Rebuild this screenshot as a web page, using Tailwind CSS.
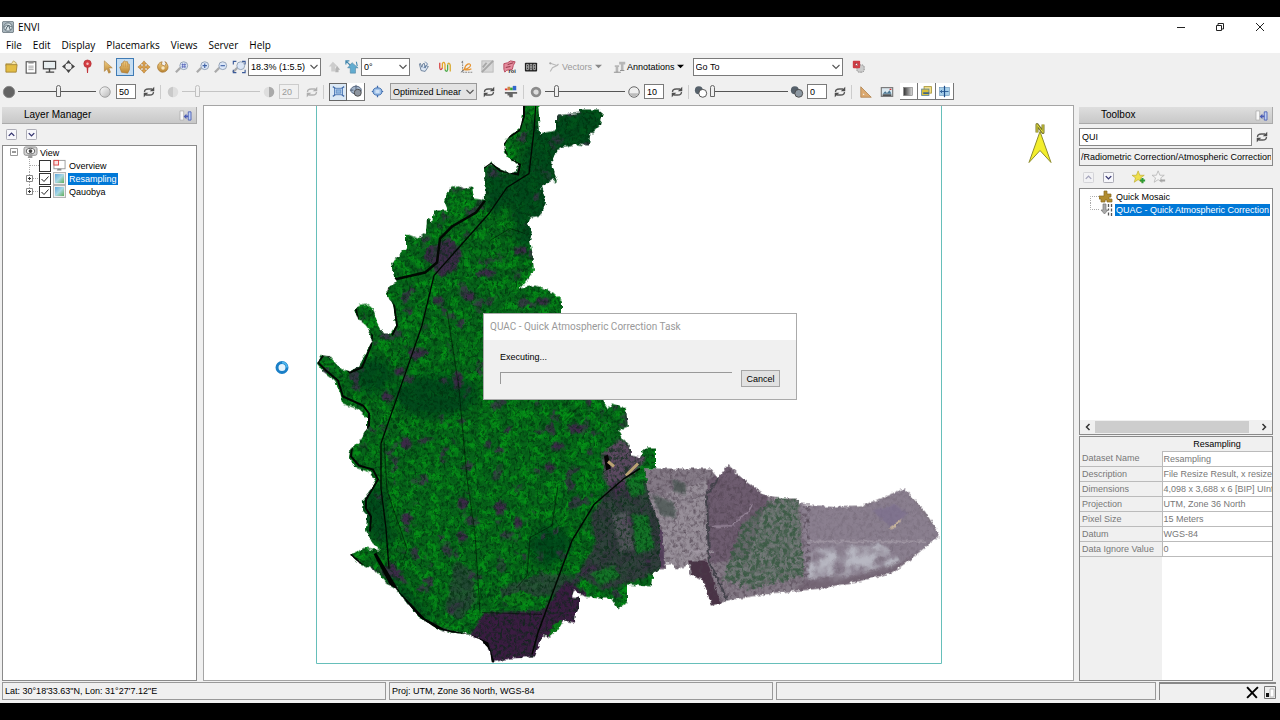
<!DOCTYPE html>
<html lang="en">
<head>
  <meta charset="UTF-8"/>
  <meta name="viewport" content="width=device-width, initial-scale=1.0"/>
  <title>ENVI</title>
  <script src="https://cdn.jsdelivr.net/npm/@tailwindcss/browser@4"></script>
</head>
<body class="bg-black">

  <!-- Icon set -->
  <svg class="absolute size-0" aria-hidden="true">
    <defs>
      <linearGradient id="gold" x1="0" y1="0" x2="0" y2="1"><stop offset="0" stop-color="#f3cf83"/><stop offset="1" stop-color="#b98432"/></linearGradient>
      <linearGradient id="ball" x1="0" y1="0" x2="1" y2="1"><stop offset="0" stop-color="#fff"/><stop offset="1" stop-color="#b5b5b5"/></linearGradient>
      <linearGradient id="sky" x1="0" y1="0" x2="1" y2="1"><stop offset="0" stop-color="#5fa8dc"/><stop offset=".5" stop-color="#a9d8e4"/><stop offset="1" stop-color="#5fae5a"/></linearGradient>
      <linearGradient id="ramp" x1="0" x2="1"><stop offset="0" stop-color="#333"/><stop offset="1" stop-color="#ddd"/></linearGradient>
    </defs>
    <symbol id="logo" viewBox="0 0 16 16"><rect x=".5" y=".5" width="15" height="15" rx="2" fill="#a9b6bd" stroke="#5c6a72"/><circle cx="8" cy="8" r="5.500" fill="#dce5e8" stroke="#4a5a64"/><path d="M3 8q3-4 6-2t4 1M5 12q1-5 4-6l2 6" fill="none" stroke="#4a5a64" stroke-width="1.200"/></symbol>
    <symbol id="open" viewBox="0 0 16 16"><path d="M2 5h6l2-3 3 2v3H2z" fill="#f6e6a8" stroke="#a88c3c" stroke-width=".7"/><path d="M2 6h12l-1 8H2z" fill="#e3bd45" stroke="#97762a" stroke-width=".8"/></symbol>
    <symbol id="clip" viewBox="0 0 16 16"><rect x="2.500" y="2" width="11" height="13" fill="#fff" stroke="#555" stroke-width="1.300"/><rect x="5" y="1" width="6" height="3" fill="#888"/><path d="M5 7h6M5 9h6M5 11h6" stroke="#999"/></symbol>
    <symbol id="screen" viewBox="0 0 16 16"><rect x="1.500" y="2.500" width="13" height="8" fill="#e8eef0" stroke="#444" stroke-width="1.300"/><path d="M8 10v4M4 14h9" stroke="#444" stroke-width="1.500"/></symbol>
    <symbol id="cross" viewBox="0 0 16 16"><circle cx="8" cy="8" r="4.500" fill="none" stroke="#444"/><path d="M8 0l3 4H5zM8 16l3-4H5zM0 8l4-3v6zM16 8l-4-3v6z" fill="#444"/><circle cx="8" cy="8" r="3.500" fill="#efefef"/></symbol>
    <symbol id="pin" viewBox="0 0 16 16"><circle cx="8" cy="5" r="4" fill="#d43d42" stroke="#a92b30" stroke-width=".6"/><circle cx="8" cy="5" r="1.300" fill="#f7c1c1"/><path d="M7 8h2l-.5 7h-1z" fill="#c2353a"/></symbol>
    <symbol id="arrow" viewBox="0 0 16 16"><path d="M5 1v12l3-3 2 5 2-1-2-5h4z" fill="url(#gold)" stroke="#ab7e3d" stroke-width=".7"/></symbol>
    <symbol id="hand" viewBox="0 0 16 16"><path d="M4 14L2 8l2-1V4l2-1V2l2-1 1 1 2 0v2l2 1v6l-2 4z" fill="url(#gold)" stroke="#b07c36" stroke-width=".8"/><path d="M6 3v5M8.500 2.500V8M11 4v4" stroke="#c38c43" stroke-width=".6"/></symbol>
    <symbol id="move" viewBox="0 0 16 16"><path d="M8 1l3 3.500H9V7h2.500V5L15 8l-3.500 3V9H9v2.500h2L8 15l-3-3.500h2V9H4.500v2L1 8l3.500-3v2H7V4.500H5z" fill="#dda24e" stroke="#a87530" stroke-width=".6"/></symbol>
    <symbol id="spin" viewBox="0 0 16 16"><path d="M13 5a6 6 0 1 1-6-3l-1 3 4 2 2-4-2-1a7 7 0 0 1 3 3z" fill="url(#gold)" stroke="#a6742f" stroke-width=".8"/><circle cx="8" cy="9" r="2" fill="#f8e7c2"/></symbol>
    <symbol id="lens" viewBox="0 0 16 16"><path d="M6 9L1 14" stroke="#a9a9a9" stroke-width="2.500"/><circle cx="10" cy="6.500" r="4.500" fill="#dbe6f6" stroke="#8c9bb0"/></symbol>
    <symbol id="zin" viewBox="0 0 16 16"><use href="#lens"/><path d="M7.500 6.500h5M10 4v5" stroke="#3f62a6" stroke-width="1.300"/></symbol>
    <symbol id="zout" viewBox="0 0 16 16"><use href="#lens"/><path d="M7.500 6.500h5" stroke="#3f62a6" stroke-width="1.300"/></symbol>
    <symbol id="zfix" viewBox="0 0 16 16"><use href="#lens"/><path d="M7.500 5.300h5M7.500 7.800h5M8.700 4v5M11.200 4v5" stroke="#5564b8" stroke-width=".9"/></symbol>
    <symbol id="zfit" viewBox="0 0 16 16"><use href="#lens"/><path d="M1.500 5V1.500H5M11.500 1.500H15V5M15 11v3.500h-3.500M5 14.500H1.500V11" fill="none" stroke="#3b5a98" stroke-width="1.300"/></symbol>
    <symbol id="up0" viewBox="0 0 16 16"><path d="M6 2l6 6H9v6H4V8H1z" fill="#ccc"/><path d="M11 7l4 5h-2v3h-4v-4z" fill="#b5b5b5"/></symbol>
    <symbol id="up1" viewBox="0 0 16 16"><path d="M8 3l7 6h-3v6H6V9H3z" fill="#62acd0" stroke="#4b7f9e" stroke-width=".6"/><path d="M1 5V1h4M1 1l5 5M13 2l1 5" stroke="#4689af" stroke-width="1.300" fill="none"/></symbol>
    <symbol id="fly" viewBox="0 0 16 16"><path d="M3 5l2 8 5 1 4-6-3-1-1 3-1-6-2 1-1 4-2-5z" fill="#dfe9f5" stroke="#59708e"/><path d="M10 2l3 3-5 5" fill="none" stroke="#4a6c9b"/></symbol>
    <symbol id="wave" viewBox="0 0 16 16"><g fill="none" stroke-width="1.500"><path d="M2 3v6q1 4 3 0" stroke="#d84848"/><path d="M5 9V4q2-3 3 1v6" stroke="#e4a428"/><path d="M8 11q2 4 3 0V5" stroke="#50ac4e"/><path d="M11 5q2-3 3 1v7" stroke="#d9aa33"/></g></symbol>
    <symbol id="scatter" viewBox="0 0 16 16"><path d="M3 2v12h12" fill="none" stroke="#777" stroke-dasharray="2 1"/><path d="M1 14l4-3M3 1l-1 2" stroke="#666"/><path d="M5 11c1-7 7-8 7-5s-4 4-7 5q5 1 8-1" fill="none" stroke="#e69432" stroke-width="1.400"/></symbol>
    <symbol id="gray" viewBox="0 0 16 16"><rect x="2" y="2" width="12" height="12" fill="#d8d8d8" stroke="#bbb"/><path d="M2 14L14 2M7 4L3 9" stroke="#a8a8a8" stroke-width="2"/></symbol>
    <symbol id="roi" viewBox="0 0 16 16"><path d="M2 5l4-1 3-2 5 1-2 4-1 4-6 1-2 2-1-3z" fill="#e58c9d" stroke="#b6475d"/><path d="M6 6l6-2M4 9l5-1" stroke="#8e3142"/><text x="7" y="15" font-family="Liberation Sans, sans-serif" font-size="6" font-weight="bold" fill="#222">roi</text></symbol>
    <symbol id="count" viewBox="0 0 16 16"><rect x="1" y="3" width="14" height="10" rx="1" fill="#222"/><path d="M3 5h2v6H3zM7 5h2v6H7zM11 5h2v6h-2zM3 8h2M7 8h2M11 8h2" fill="none" stroke="#ddd" stroke-width=".8"/></symbol>
    <symbol id="vec" viewBox="0 0 16 16"><path d="M3 3l9 3-6 3-3 5M12 6l2-2" fill="none" stroke="#b8b8b8" stroke-width="1.500"/><circle cx="3" cy="3" r="1.500" fill="#aaa"/></symbol>
    <symbol id="ann" viewBox="0 0 16 16"><path d="M7 2h7v3h-2v7H9V5H7zM2 6h5v2H6v6H3V8H2z" fill="#b7b7b7"/><path d="M1 14h8M8 12h5" stroke="#888"/></symbol>
    <symbol id="goto" viewBox="0 0 16 16"><rect x="6" y="6" width="9" height="9" rx="3" fill="#ccc" stroke="#777" stroke-dasharray="2 1"/><rect x="1" y="1" width="9" height="9" rx="1" fill="#cf3c45"/><rect x="4" y="4" width="3" height="3" fill="#fff" stroke="#8a1d28" stroke-width=".7"/></symbol>
    <symbol id="sync" viewBox="0 0 16 16"><path d="M2 8q0-4 5-4h5M14 8q0 4-5 4H4" fill="none" stroke="#5a5a5a" stroke-width="1.800"/><path d="M15 1v6H9zM1 15V9h6z" fill="#4d4d4d"/></symbol>
    <symbol id="dark" viewBox="0 0 16 16"><circle cx="8" cy="8" r="6.500" fill="#636363" stroke="#868686"/></symbol>
    <symbol id="light" viewBox="0 0 16 16"><circle cx="8" cy="8" r="6" fill="url(#ball)" stroke="#999"/></symbol>
    <symbol id="halfl" viewBox="0 0 16 16"><path d="M8 2a6 6 0 0 0 0 12z" fill="#c9c9c9"/><path d="M8 2a6 6 0 0 1 0 12z" fill="#dedede"/></symbol>
    <symbol id="halfr" viewBox="0 0 16 16"><path d="M8 2a6 6 0 0 0 0 12z" fill="#dedede"/><path d="M8 2a6 6 0 0 1 0 12z" fill="#aaa"/></symbol>
    <symbol id="ring" viewBox="0 0 16 16"><circle cx="8" cy="8" r="4.500" fill="#ddd" stroke="#8b8b8b" stroke-width="3"/></symbol>
    <symbol id="half2" viewBox="0 0 16 16"><circle cx="8" cy="8" r="6" fill="#eee" stroke="#555"/><path d="M2.500 9.500a6 6 0 0 0 11 0z" fill="#bbb"/></symbol>
    <symbol id="two0" viewBox="0 0 16 16"><circle cx="5.500" cy="6" r="4.500" fill="#56616b"/><circle cx="10" cy="9.500" r="4.500" fill="#fff" stroke="#444"/></symbol>
    <symbol id="two1" viewBox="0 0 16 16"><circle cx="5.500" cy="6" r="4.500" fill="#56616b"/><circle cx="10" cy="9.500" r="4.500" fill="#8d98a2" stroke="#444"/></symbol>
    <symbol id="box0" viewBox="0 0 16 16"><path d="M1 2l3 2M15 2l-3 2M1 14l3-2M15 14l-3-2" stroke="#456ca8" stroke-width="1.500"/><rect x="3" y="4" width="10" height="8" fill="#c2daf2" stroke="#3f6dae"/><rect x="5" y="6" width="6" height="4" fill="#8db5e0" stroke="#3f6dae" stroke-width=".6"/></symbol>
    <symbol id="box1" viewBox="0 0 16 16"><ellipse cx="8" cy="7" rx="6" ry="4.500" fill="#a3b4c9" stroke="#4a5c76"/><circle cx="10" cy="10" r="4" fill="#8d949e" stroke="#444"/><path d="M8 1v5M1 7h4" stroke="#4a5c76"/></symbol>
    <symbol id="box2" viewBox="0 0 16 16"><path d="M8 1v14M1 8h14" stroke="#3c68aa" stroke-width="1.500"/><ellipse cx="8" cy="8" rx="5.500" ry="4.500" fill="#9cbfe8" stroke="#3f6dae" stroke-width="1.200"/><rect x="5.500" y="6" width="5" height="4" fill="#cfe1f5"/></symbol>
    <symbol id="hist" viewBox="0 0 16 16"><path d="M1 6V4h3v2z" fill="#d33"/><path d="M4 6V2h3v4z" fill="#c84"/><path d="M7 6V3h3v3z" fill="#3a3"/><path d="M10 6V1h4v5z" fill="#36c"/><path d="M1 8h14v2H1zM4 10h6v4H6v-2H4z" fill="#666"/></symbol>
    <symbol id="angle" viewBox="0 0 16 16"><path d="M2 2l12 12H2z" fill="#dba970" stroke="#a8773f" stroke-width=".8"/><path d="M4.500 9.500v2h2z" fill="#efefef"/></symbol>
    <symbol id="pict" viewBox="0 0 16 16"><rect x="1.500" y="3" width="13" height="10" fill="#dbe8ef" stroke="#777" stroke-width="1.300"/><path d="M3 10l3-3 2 2 3-3 2 4z" fill="#4b7691"/><path d="M3 11.500h10" stroke="#222" stroke-width="1.500"/><path d="M11 5h2" stroke="#c33" stroke-width="1.500"/></symbol>
    <symbol id="blend" viewBox="0 0 16 16"><rect x="2" y="3" width="11" height="10" fill="url(#ramp)" stroke="#777" stroke-width=".7"/></symbol>
    <symbol id="flick" viewBox="0 0 16 16"><rect x="5" y="2" width="9" height="8" fill="#f3e08b" stroke="#a48f2c"/><rect x="2" y="5" width="9" height="8" fill="#d9bf36" stroke="#5a82a7"/><path d="M4 10h7" stroke="#345f8b" stroke-width="2"/></symbol>
    <symbol id="swipe" viewBox="0 0 16 16"><rect x="2" y="3" width="12" height="10" fill="#a8d0ea" stroke="#5e8bb0" stroke-width=".7"/><path d="M8 1v14" stroke="#1d4f8c" stroke-width="1.500"/><path d="M3 8h10M5 6L3 8l2 2" stroke="#1d4f8c" fill="none"/></symbol>
    <symbol id="chev" viewBox="0 0 10 10"><path d="M1.500 3L5 6.500 8.500 3" fill="none" stroke="#555" stroke-width="1.100"/></symbol>
    <symbol id="dock" viewBox="0 0 14 12"><path d="M1 1h4v10H1z" fill="#f8f8f8" stroke="#aaa" stroke-width=".8"/><path d="M10 2h3v9h-3z" fill="#bed0f5" stroke="#5064b8"/><path d="M5 7l3-3v2h2v2H8v2z" fill="#4a5cb5"/></symbol>
    <symbol id="sqdn" viewBox="0 0 12 12"><rect x=".5" y=".5" width="11" height="11" rx="1" fill="#f7f7fb" stroke="#a2a2ac"/><path d="M3 4.500L6 7.500 9 4.500" fill="none" stroke="#33336e" stroke-width="1.500"/></symbol>
    <symbol id="squp" viewBox="0 0 12 12"><rect x=".5" y=".5" width="11" height="11" rx="1" fill="#f7f7fb" stroke="#a2a2ac"/><path d="M3 7.500L6 4.500 9 7.500" fill="none" stroke="#33336e" stroke-width="1.500"/></symbol>
    <symbol id="star" viewBox="0 0 16 16"><path d="M7 1l2 5h5l-4 3 1.500 5L7 11l-4.500 3L4 9 0 6h5z" fill="#efe04c" stroke="#b9a62a" stroke-width=".7"/><path d="M12 9v6M9 12h6" stroke="#2f9a35" stroke-width="2.300"/></symbol>
    <symbol id="star0" viewBox="0 0 16 16"><path d="M7 1l2 5h5l-4 3 1.500 5L7 11l-4.500 3L4 9 0 6h5z" fill="#f4f4f4" stroke="#b5b5b5" stroke-width=".9"/><path d="M9 12h6" stroke="#a5a5a5" stroke-width="2.300"/></symbol>
    <symbol id="eye" viewBox="0 0 16 14"><rect x="1" y="1" width="14" height="9" rx="2" fill="#d5d5d5" stroke="#8a8a8a"/><path d="M6 10h4v3H5z" fill="#999"/><ellipse cx="8" cy="5.500" rx="4.500" ry="3" fill="#fff" stroke="#555"/><circle cx="8" cy="5.500" r="2" fill="#444"/></symbol>
    <symbol id="over" viewBox="0 0 14 13"><rect x="1" y="1" width="12" height="9" fill="#fff" stroke="#999"/><rect x="1" y="1" width="5" height="5" fill="#fbe2e2" stroke="#d44"/><path d="M5 10h4v2H4z" fill="#888"/></symbol>
    <symbol id="raster" viewBox="0 0 13 13"><rect x=".5" y=".5" width="12" height="12" fill="#eee" stroke="#b5b5b5"/><rect x="2" y="2" width="9" height="9" fill="url(#sky)"/></symbol>
    <symbol id="puzzle" viewBox="0 0 14 13"><path d="M5 1h3v3h4v3h-2v2h3v3H8v-2H6v2H2V9H0V6h5z" fill="#b18c2f" stroke="#86691f" stroke-width=".7"/></symbol>
    <symbol id="task" viewBox="0 0 14 13"><path d="M4 1h3v6h2l-3.500 4L2 7h2z" fill="#a9a9a9" stroke="#777" stroke-width=".7"/><path d="M9.500 1v3M12.500 1v3M9.500 5.500v2M12.500 5.500v3M9.500 9.500v3M12.500 10v3" stroke="#555" stroke-width="1.300"/></symbol>
  </svg>

  <div class="flex h-screen flex-col bg-black py-[17px] font-['Liberation_Sans',sans-serif] text-[9px] leading-3 text-black">

    <!-- Title bar -->
    <header class="flex h-[19px] shrink-0 items-center bg-white pl-[2px] font-['Open_Sans',sans-serif]">
      <svg class="size-3"><use href="#logo"/></svg>
      <h1 class="ml-1 flex-1 text-[10px]">ENVI</h1>
      <button aria-label="Minimize" class="flex w-[39px] justify-center"><svg class="size-[10px]" viewBox="0 0 10 10"><path d="M1 5.500h8" stroke="#222"/></svg></button>
      <button aria-label="Restore" class="flex w-[39px] justify-center"><svg class="size-[10px]" viewBox="0 0 10 10"><path d="M1.500 3.500h5v5h-5zM3 3V1.500h5.500V7H7" fill="none" stroke="#222"/></svg></button>
      <button aria-label="Close" class="flex w-[41px] justify-center"><svg class="size-[10px]" viewBox="0 0 10 10"><path d="M1 1l8 8M9 1L1 9" stroke="#222"/></svg></button>
    </header>

    <!-- Menu -->
    <nav class="flex h-[17px] shrink-0 items-center gap-[11px] bg-white pl-[6px] font-['Open_Sans',sans-serif] text-[10px]">
      <a href="#">File</a>
      <a href="#">Edit</a>
      <a href="#">Display</a>
      <a href="#">Placemarks</a>
      <a href="#">Views</a>
      <a href="#">Server</a>
      <a href="#">Help</a>
    </nav>

    <!-- Toolbar: tools -->
    <div class="flex h-[27px] shrink-0 items-center bg-[#f0f0f0] pl-[2px]">
      <button aria-label="Open" class="flex w-[19px] justify-center"><svg class="size-[15px]"><use href="#open"/></svg></button>
      <button aria-label="Data manager" class="flex w-[19px] justify-center"><svg class="size-[14px]"><use href="#clip"/></svg></button>
      <button aria-label="Screen" class="flex w-[19px] justify-center"><svg class="size-[15px]"><use href="#screen"/></svg></button>
      <button aria-label="Crosshairs" class="flex w-[19px] justify-center"><svg class="size-[13px]"><use href="#cross"/></svg></button>
      <button aria-label="Placemark" class="flex w-[19px] justify-center"><svg class="size-[15px]"><use href="#pin"/></svg></button>
      <button aria-label="Select" class="flex w-[19px] justify-center"><svg class="size-[14px]"><use href="#arrow"/></svg></button>
      <button aria-label="Pan" class="flex h-[18px] w-[18px] items-center justify-center border border-[#3f7bb5] bg-[#c5ddf2]"><svg class="size-[14px]"><use href="#hand"/></svg></button>
      <button aria-label="Fly" class="flex w-[19px] justify-center"><svg class="size-[14px]"><use href="#move"/></svg></button>
      <button aria-label="Rotate" class="flex w-[19px] justify-center"><svg class="size-[14px]"><use href="#spin"/></svg></button>
      <button aria-label="Zoom" class="flex w-[19px] justify-center"><svg class="size-[14px]"><use href="#zfix"/></svg></button>
      <button aria-label="Zoom in" class="ml-[3px] flex w-[18px] justify-center"><svg class="size-[14px]"><use href="#zin"/></svg></button>
      <button aria-label="Zoom out" class="flex w-[18px] justify-center"><svg class="size-[14px]"><use href="#zout"/></svg></button>
      <button aria-label="Full extent" class="flex w-[18px] justify-center"><svg class="size-[14px]"><use href="#zfit"/></svg></button>
      <div class="grid w-[73px] items-center">
        <select aria-label="Zoom level" class="col-start-1 row-start-1 h-[18px] appearance-none border border-[#7a7a7a] bg-white px-[2px]"><option>18.3% (1:5.5)</option></select>
        <svg class="pointer-events-none col-start-1 row-start-1 mr-[2px] size-[10px] justify-self-end"><use href="#chev"/></svg>
      </div>
      <button aria-label="Rotate view" class="ml-1 flex w-[18px] justify-center"><svg class="size-[13px]"><use href="#up0"/></svg></button>
      <button aria-label="North up" class="flex w-[18px] justify-center"><svg class="size-[14px]"><use href="#up1"/></svg></button>
      <div class="grid w-[49px] items-center">
        <select aria-label="Rotation" class="col-start-1 row-start-1 h-[18px] appearance-none border border-[#7a7a7a] bg-white px-[2px]"><option>0°</option></select>
        <svg class="pointer-events-none col-start-1 row-start-1 mr-[2px] size-[10px] justify-self-end"><use href="#chev"/></svg>
      </div>
      <button aria-label="Cursor value" class="ml-[2px] flex w-[22px] justify-center"><svg class="size-[13px]"><use href="#fly"/></svg></button>
      <button aria-label="Spectral profile" class="flex w-[22px] justify-center"><svg class="size-[14px]"><use href="#wave"/></svg></button>
      <button aria-label="Scatter plot" class="flex w-[21px] justify-center"><svg class="size-[14px]"><use href="#scatter"/></svg></button>
      <button aria-label="Density slice" class="flex w-[21px] justify-center"><svg class="size-[15px]"><use href="#gray"/></svg></button>
      <button aria-label="Region of interest" class="flex w-[22px] justify-center"><svg class="size-[15px]"><use href="#roi"/></svg></button>
      <button aria-label="Feature counting" class="flex w-[21px] justify-center"><svg class="size-[14px]"><use href="#count"/></svg></button>
      <button class="ml-[5px] flex items-center text-[#9a9a9a]"><svg class="mx-[2px] size-3"><use href="#vec"/></svg>Vectors<svg class="ml-[3px] size-[7px]" viewBox="0 0 8 8"><path d="M0 2h8L4 6z" fill="#888"/></svg></button>
      <button class="ml-[11px] flex items-center"><svg class="size-[14px]"><use href="#ann"/></svg>Annotations<svg class="ml-[2px] size-[7px]" viewBox="0 0 8 8"><path d="M0 2h8L4 6z"/></svg></button>
      <div class="ml-[9px] grid w-[150px] items-center">
        <select aria-label="Go to" class="col-start-1 row-start-1 h-[18px] appearance-none border border-[#7a7a7a] bg-white px-[2px]"><option>Go To</option></select>
        <svg class="pointer-events-none col-start-1 row-start-1 mr-[2px] size-[10px] justify-self-end"><use href="#chev"/></svg>
      </div>
      <button aria-label="Link views" class="ml-[9px]"><svg class="size-[13px]"><use href="#goto"/></svg></button>
    </div>

    <!-- Toolbar: display enhancement -->
    <div class="flex h-[25px] shrink-0 items-center bg-[#f0f0f0] pb-[2px] pl-[2px]">
      <svg class="size-[14px]"><use href="#dark"/></svg>
      <input type="range" aria-label="Brightness" value="52" class="mx-[2px] h-[14px] w-[78px] appearance-none bg-transparent [&::-webkit-slider-runnable-track]:h-px [&::-webkit-slider-runnable-track]:bg-[#555] [&::-webkit-slider-thumb]:-mt-[6px] [&::-webkit-slider-thumb]:h-3 [&::-webkit-slider-thumb]:w-[5px] [&::-webkit-slider-thumb]:appearance-none [&::-webkit-slider-thumb]:rounded-t-sm [&::-webkit-slider-thumb]:border [&::-webkit-slider-thumb]:border-[#666] [&::-webkit-slider-thumb]:bg-[#f0f0f0]"/>
      <svg class="size-[14px]"><use href="#light"/></svg>
      <input type="text" aria-label="Brightness value" value="50" class="ml-[4px] h-[15px] w-[20px] border border-[#7a7a7a] bg-white px-[2px]"/>
      <button aria-label="Reset brightness" class="ml-[7px]"><svg class="size-[12px]"><use href="#sync"/></svg></button>
      <span class="mx-[5px] h-[14px] w-px bg-[#ccc]"></span>
      <svg class="size-[14px]"><use href="#halfl"/></svg>
      <input type="range" aria-label="Contrast" value="18" disabled class="mx-[2px] h-[14px] w-[78px] appearance-none bg-transparent [&::-webkit-slider-runnable-track]:h-px [&::-webkit-slider-runnable-track]:bg-[#c4c4c4] [&::-webkit-slider-thumb]:-mt-[6px] [&::-webkit-slider-thumb]:h-3 [&::-webkit-slider-thumb]:w-[5px] [&::-webkit-slider-thumb]:appearance-none [&::-webkit-slider-thumb]:rounded-t-sm [&::-webkit-slider-thumb]:border [&::-webkit-slider-thumb]:border-[#c0c0c0] [&::-webkit-slider-thumb]:bg-[#f0f0f0]"/>
      <svg class="size-[14px]"><use href="#halfr"/></svg>
      <input type="text" aria-label="Contrast value" value="20" disabled class="ml-[3px] h-[15px] w-[20px] border border-[#ccc] px-[2px] text-[#9a9a9a]"/>
      <button aria-label="Reset contrast" class="ml-[7px] opacity-40"><svg class="size-[12px]"><use href="#sync"/></svg></button>
      <span class="mx-[5px] h-[14px] w-px bg-[#ccc]"></span>
      <button aria-label="Stretch on view extent" class="flex h-[18px] w-[18px] items-center justify-center border border-[#666] bg-[#dce9f5]"><svg class="size-[13px]"><use href="#box0"/></svg></button>
      <button aria-label="Dynamic stretch" class="flex h-[18px] w-[18px] items-center justify-center border-r border-b border-[#777] bg-white"><svg class="size-[14px]"><use href="#box1"/></svg></button>
      <button aria-label="Stretch full extent" class="mx-[6px]"><svg class="size-[13px]"><use href="#box2"/></svg></button>
      <div class="grid w-[87px] items-center">
        <select aria-label="Stretch type" class="col-start-1 row-start-1 h-[17px] appearance-none border border-[#999] bg-[#e3e3e3] px-[2px]"><option>Optimized Linear</option></select>
        <svg class="pointer-events-none col-start-1 row-start-1 mr-[2px] size-[10px] justify-self-end"><use href="#chev"/></svg>
      </div>
      <button aria-label="Reset stretch" class="ml-[6px]"><svg class="size-[12px]"><use href="#sync"/></svg></button>
      <button aria-label="Histogram stretch" class="ml-[9px]"><svg class="size-[14px]"><use href="#hist"/></svg></button>
      <span class="mx-[5px] h-[14px] w-px bg-[#ccc]"></span>
      <svg class="size-[14px]"><use href="#ring"/></svg>
      <input type="range" aria-label="Sharpen" value="12" class="mx-[2px] h-[14px] w-[80px] appearance-none bg-transparent [&::-webkit-slider-runnable-track]:h-px [&::-webkit-slider-runnable-track]:bg-[#555] [&::-webkit-slider-thumb]:-mt-[6px] [&::-webkit-slider-thumb]:h-3 [&::-webkit-slider-thumb]:w-[5px] [&::-webkit-slider-thumb]:appearance-none [&::-webkit-slider-thumb]:rounded-t-sm [&::-webkit-slider-thumb]:border [&::-webkit-slider-thumb]:border-[#666] [&::-webkit-slider-thumb]:bg-[#f0f0f0]"/>
      <svg class="size-[14px]"><use href="#half2"/></svg>
      <input type="text" aria-label="Sharpen value" value="10" class="ml-[3px] h-[15px] w-[20px] border border-[#7a7a7a] bg-white px-[2px]"/>
      <button aria-label="Reset sharpen" class="ml-[7px]"><svg class="size-[12px]"><use href="#sync"/></svg></button>
      <span class="mx-[5px] h-[14px] w-px bg-[#ccc]"></span>
      <svg class="size-[14px]"><use href="#two0"/></svg>
      <input type="range" aria-label="Transparency" value="0" class="mx-[2px] h-[14px] w-[78px] appearance-none bg-transparent [&::-webkit-slider-runnable-track]:h-px [&::-webkit-slider-runnable-track]:bg-[#555] [&::-webkit-slider-thumb]:-mt-[6px] [&::-webkit-slider-thumb]:h-3 [&::-webkit-slider-thumb]:w-[5px] [&::-webkit-slider-thumb]:appearance-none [&::-webkit-slider-thumb]:rounded-t-sm [&::-webkit-slider-thumb]:border [&::-webkit-slider-thumb]:border-[#666] [&::-webkit-slider-thumb]:bg-[#f0f0f0]"/>
      <svg class="size-[14px]"><use href="#two1"/></svg>
      <input type="text" aria-label="Transparency value" value="0" class="ml-[3px] h-[15px] w-[20px] border border-[#7a7a7a] bg-white px-[2px]"/>
      <button aria-label="Reset transparency" class="ml-[7px]"><svg class="size-[12px]"><use href="#sync"/></svg></button>
      <span class="mx-[5px] h-[14px] w-px bg-[#ccc]"></span>
      <button aria-label="Measure" class="ml-[2px]"><svg class="size-[14px]"><use href="#angle"/></svg></button>
      <button aria-label="Portal" class="ml-[7px]"><svg class="size-[14px]"><use href="#pict"/></svg></button>
      <button aria-label="Blend" class="ml-[6px] flex h-[17px] w-[18px] items-center justify-center border-r border-b border-[#777] bg-white"><svg class="size-[13px]"><use href="#blend"/></svg></button>
      <button aria-label="Flicker" class="flex h-[17px] w-[18px] items-center justify-center border-r border-b border-[#777] bg-white"><svg class="size-[13px]"><use href="#flick"/></svg></button>
      <button aria-label="Swipe" class="flex h-[17px] w-[18px] items-center justify-center border-r border-b border-[#777] bg-white"><svg class="size-[13px]"><use href="#swipe"/></svg></button>
    </div>

    <main class="flex min-h-0 flex-1 bg-[#f0f0f0] pr-[7px] pl-[2px]">

      <!-- Layer manager -->
      <section class="flex w-[195px] shrink-0 flex-col pt-[2px]">
        <div class="flex h-[17px] shrink-0 items-center justify-between border-r border-b border-[#aaa] bg-linear-to-b from-[#dedede] to-[#c8c8c8] pr-1 pl-[22px]">
          <h2 class="text-[10px]">Layer Manager</h2>
          <button aria-label="Undock"><svg class="h-[11px] w-[13px]"><use href="#dock"/></svg></button>
        </div>
        <div class="flex h-[21px] shrink-0 items-center gap-[9px] pl-1">
          <button aria-label="Collapse all"><svg class="size-[11px]"><use href="#squp"/></svg></button>
          <button aria-label="Expand all"><svg class="size-[11px]"><use href="#sqdn"/></svg></button>
        </div>
        <div class="min-h-0 flex-1 border border-[#8a8a8a] bg-white pl-[7px]">
          <div class="flex h-[13px] items-center">
            <svg class="size-[9px]" viewBox="0 0 9 9"><path d="M.5.500h7v7h-7z" fill="#fff" stroke="#999"/><path d="M2 4h4" stroke="#333"/></svg>
            <svg class="ml-1 h-[13px] w-[15px]"><use href="#eye"/></svg>
            <span class="ml-[2px]">View</span>
          </div>
          <div class="ml-[19px] border-l border-dotted border-[#aaa]">
            <div class="flex h-[13px] items-center">
              <span class="w-[9px] border-t border-dotted border-[#aaa]"></span>
              <input id="lyOverview" type="checkbox" class="size-[12px] appearance-none border border-[#333] bg-white"/>
              <svg class="ml-[2px] size-[13px]"><use href="#over"/></svg>
              <label for="lyOverview" class="ml-[2px] px-px">Overview</label>
            </div>
          </div>
          <div class="ml-[16px]">
            <div class="flex h-[13px] items-center">
              <svg class="h-[13px] w-[13px]" viewBox="0 0 13 13"><path d="M3.500 0v13M7 6.500h6" stroke="#aaa" stroke-dasharray="1 1"/><path d="M.5 3.500h6v6h-6z" fill="#fff" stroke="#888"/><path d="M2 6.500h3M3.500 5v3" stroke="#333"/></svg>
              <span class="grid">
                <input id="lyResampling" type="checkbox" checked class="col-start-1 row-start-1 size-[12px] appearance-none border border-[#333] bg-white"/>
                <svg class="pointer-events-none col-start-1 row-start-1 size-[12px]" viewBox="0 0 12 12"><path d="M2.500 6l2.500 2.500 4.500-5" fill="none" stroke="#222"/></svg>
              </span>
              <svg class="ml-[2px] size-[13px]"><use href="#raster"/></svg>
              <label for="lyResampling" class="ml-[2px] bg-[#0078d7] px-px text-white">Resampling</label>
            </div>
            <div class="flex h-[13px] items-center">
              <svg class="h-[13px] w-[13px]" viewBox="0 0 13 13"><path d="M3.500 0v6M7 6.500h6" stroke="#aaa" stroke-dasharray="1 1"/><path d="M.5 3.500h6v6h-6z" fill="#fff" stroke="#888"/><path d="M2 6.500h3M3.500 5v3" stroke="#333"/></svg>
              <span class="grid">
                <input id="lyQauobya" type="checkbox" checked class="col-start-1 row-start-1 size-[12px] appearance-none border border-[#333] bg-white"/>
                <svg class="pointer-events-none col-start-1 row-start-1 size-[12px]" viewBox="0 0 12 12"><path d="M2.500 6l2.500 2.500 4.500-5" fill="none" stroke="#222"/></svg>
              </span>
              <svg class="ml-[2px] size-[13px]"><use href="#raster"/></svg>
              <label for="lyQauobya" class="ml-[2px] px-px">Qauobya</label>
            </div>
          </div>
        </div>
      </section>

      <!-- Image view -->
      <section class="relative ml-[6px] min-w-0 flex-1 border border-[#a5a5a5] bg-white">
        <svg class="size-full" viewBox="204 106 869 573" role="img" aria-label="Satellite scene">
          <defs>
            <filter id="rough" x="300" y="90" width="660" height="590" filterUnits="userSpaceOnUse" color-interpolation-filters="sRGB">
              <feTurbulence type="fractalNoise" baseFrequency=".22" numOctaves="2" seed="4"/>
              <feDisplacementMap in="SourceGraphic" scale="5" xChannelSelector="R" yChannelSelector="G"/>
            </filter>
            <filter id="shade" x="0" y="0" width="100%" height="100%" color-interpolation-filters="sRGB">
              <feTurbulence type="fractalNoise" baseFrequency=".35" numOctaves="3" seed="8"/>
              <feColorMatrix values="0 0 0 0 0  0 0 0 0 .16  0 0 0 0 .05  4 0 0 0 -1.8"/>
            </filter>
            <filter id="bright" x="0" y="0" width="100%" height="100%" color-interpolation-filters="sRGB">
              <feTurbulence type="fractalNoise" baseFrequency=".1" numOctaves="4" seed="21"/>
              <feColorMatrix values="0 0 0 0 .02  0 0 0 0 .62  0 0 0 0 .09  0 4 0 0 -1.7"/>
            </filter>
            <filter id="towns" x="0" y="0" width="100%" height="100%" color-interpolation-filters="sRGB">
              <feTurbulence type="fractalNoise" baseFrequency=".055" numOctaves="3" seed="33"/>
              <feColorMatrix values="0 0 0 0 .24  0 0 0 0 .19  0 0 0 0 .29  0 0 9 0 -5.7"/>
            </filter>
            <filter id="grit" x="0" y="0" width="100%" height="100%" color-interpolation-filters="sRGB">
              <feTurbulence type="fractalNoise" baseFrequency=".3" numOctaves="3" seed="5"/>
              <feColorMatrix values="0 0 0 0 .3  0 0 0 0 .25  0 0 0 0 .3  2.6 0 0 0 -1.15"/>
            </filter>
            <filter id="field" x="0" y="0" width="100%" height="100%" color-interpolation-filters="sRGB">
              <feTurbulence type="fractalNoise" baseFrequency=".25" numOctaves="3" seed="12"/>
              <feColorMatrix values="0 0 0 0 .2  0 0 0 0 .34  0 0 0 0 .24  0 5 0 0 -2.1"/>
              <feComposite in2="SourceAlpha" operator="in"/>
            </filter>
            <filter id="cloud" x="0" y="0" width="100%" height="100%" color-interpolation-filters="sRGB">
              <feTurbulence type="fractalNoise" baseFrequency=".06" numOctaves="4" seed="9"/>
              <feColorMatrix values="0 0 0 0 .72  0 0 0 0 .72  0 0 0 0 .76  0 4 0 0 -1.4"/>
              <feComposite in2="SourceAlpha" operator="in"/>
            </filter>
            <filter id="soft" x="-30%" y="-30%" width="160%" height="160%"><feGaussianBlur stdDeviation="5"/></filter>
            <filter id="softer" x="-30%" y="-30%" width="160%" height="160%"><feGaussianBlur stdDeviation="1"/></filter>
            <clipPath id="delta">
              <path d="M523 100L523 115 520 128 510 135 504 143 505 152 512 160 518 163 517 171 510 173 502 170 491 162 484 167 485 200 474 198 472 186 464 188 456 185 450 188 444 200 448 210 434 210 432 222 427 218 426 232 418 238 406 233 406 247 400 254 391 262 394 277 397 281 388 287 387 296 393 303 396 325 391 333 383 333 377 322 373 308 366 303 358 305 355 310 358 318 366 325 371 333 372 341 364 355 357 367 350 371 340 368 330 356 322 355 317 363 323 371 335 380 340 392 343 403 358 409 367 417 367 428 360 440 350 450 349 458 356 467 370 472 375 482 370 491 363 500 362 509 367 515 366 530 372 542 380 550 366 547 350 554 360 563 375 570 386 582 396 588 407 602 420 617 437 628 452 632 470 634 482 640 490 650 492 662 510 658 535 656 540 642 543 635 549 637 558 629 563 620 574 622 575 612 580 607 580 597 572 596 574 590 584 596 600 598 612 598 619 609 627 602 627 584 652 586 654 570 666 570 662 530 650 500 645 468 656 468 656 448 645 448 640 457 631 455 631 447 622 438 618 430 628 426 626 408 612 403 608 408 603 400 600 360 562 313 562 300 553 292 535 285 520 288 534 270 532 250 530 240 532 232 528 222 530 217 540 215 546 202 541 186 552 180 558 181 553 168 552 158 560 147 575 144 589 145 590 135 600 125 603 112 598 109 580 109 580 112 556 115 556 130 540 133 538 100Z"/>
            </clipPath>
            <clipPath id="desert">
              <path d="M644 468L710 468 718 478 728 464 740 476 755 487 768 496 780 498 798 498 798 503 835 507 860 506 880 498 904 488 925 511 940 535 905 563 890 573 862 580 820 588 770 593 727 600 712 605 702 578 689 574 689 564 676 569 672 563 666 563 666 570 654 570 644 520Z"/>
            </clipPath>
          </defs>

          <!-- Land cover -->
          <g filter="url(#rough)">
            <g clip-path="url(#desert)">
              <path d="M640 440h310v180H640z" fill="#857b87"/>
              <path d="M645 500l62-20v90h-62z" fill="#98909a"/>
              <path d="M708 480l20-14 40 32-20 60-40 5z" fill="#6e5d70"/>
              <path d="M689 560h18l14 45h-20z" fill="#4a3346"/>
              <path d="M800 500l60 8 44-20 36 47-50 38-85 10z" fill="#8b8090"/>
              <path d="M640 440h170v180H640z" filter="url(#grit)" opacity=".75"/>
              <path d="M800 480h150v120H800z" filter="url(#grit)" opacity=".25"/>
              <g filter="url(#softer)"><path d="M810 552l28-10 20 4 22-3 22 18-14 8-30 6-28 8-22-4z" filter="url(#cloud)"/></g>
              <path d="M806 578l50-4 50-14 10-6-6 18-60 20-60 4z" fill="#70606f" opacity=".7" filter="url(#softer)"/>
              <path d="M780 500l18-2 6 76-50 12-30-10 20-55z" fill="#64786a" opacity=".5" filter="url(#softer)"/>
              <path d="M770 498h28l6 78-55 14-28-10 20-55z" filter="url(#field)" opacity=".8"/>
              <path d="M652 494l22 8 2 16-16-4zM672 478l14 6v10l-12-3z" fill="#3f4f49" opacity=".7" filter="url(#softer)"/>
              <path d="M689 551h26M806 541h120" stroke="#a59ca8" stroke-width="1.500"/>
              <path d="M752 503q-2 9-12 14-5 4-6 8l-22 1" fill="none" stroke="#98889b" stroke-width="1.500"/>
              <path d="M718 478l-11 15 2 68 18 38" fill="none" stroke="#42424a" stroke-width="2"/>
              <path d="M652 490l28 10 28-6" fill="none" stroke="#665c68"/>
              <path d="M872 510l22-6 14 8-16 16z" fill="#7a6d90" opacity=".6" filter="url(#softer)"/>
              <path d="M888 528l14-10-6 9z" fill="#c6b39c"/>
            </g>

            <g clip-path="url(#delta)">
              <path d="M310 95h350v580H310z" fill="#07651a"/>
              <path d="M310 95h350v580H310z" filter="url(#bright)" opacity=".75"/>
              <g fill="#063f1a" opacity=".75" filter="url(#soft)">
                <path d="M530 125l75-25v45l-45 15-10 60-30 40-10-60z"/>
                <path d="M484 160l40 20-25 35-15-10z"/>
                <ellipse cx="435" cy="395" rx="42" ry="22"/>
                <ellipse cx="372" cy="375" rx="20" ry="18"/>
                <ellipse cx="550" cy="545" rx="20" ry="20"/>
                <path d="M365 480l20 10 10 60-15-5-20-30z"/>
                <path d="M380 560l60 65-40-20z"/>
              </g>
              <path d="M310 95h350v580H310z" filter="url(#towns)" opacity=".85"/>
              <g fill="#3d2b49" filter="url(#softer)">
                <path d="M436 245l14-8 12 14-6 18-14 8-10-8z"/>
                <path d="M425 248l10-4-2 20-8-4z"/>
                <ellipse cx="458" cy="380" rx="5" ry="9"/><ellipse cx="418" cy="352" rx="10" ry="4"/><ellipse cx="400" cy="371" rx="6" ry="4"/>
                <ellipse cx="386" cy="395" rx="4" ry="5"/><ellipse cx="406" cy="443" rx="6" ry="6"/><ellipse cx="558" cy="446" rx="7" ry="4"/>
                <ellipse cx="576" cy="428" rx="9" ry="5"/><ellipse cx="500" cy="507" rx="6" ry="7"/><ellipse cx="463" cy="503" rx="6" ry="6"/>
                <ellipse cx="407" cy="518" rx="6" ry="6"/><ellipse cx="462" cy="536" rx="6" ry="5"/><ellipse cx="550" cy="467" rx="5" ry="5"/>
                <ellipse cx="488" cy="272" rx="8" ry="4"/><ellipse cx="470" cy="296" rx="6" ry="5"/><ellipse cx="438" cy="300" rx="5" ry="4"/>
                <ellipse cx="520" cy="250" rx="7" ry="4"/><ellipse cx="543" cy="301" rx="7" ry="4"/><ellipse cx="518" cy="522" rx="4" ry="6"/>
                <path d="M390 560l20 25-20-10z"/><path d="M455 560l18 10 4 30-16 20-16-10z" opacity=".5"/><path d="M500 588l44-16 40 6-20 14-30 5-30 8z" opacity=".6"/>
              </g>
              <path d="M484 612l58-2 24-30 20 12v30l-35 20-10 30H488l-4-24-18-8z" fill="#3a1e42" filter="url(#softer)"/>
              <path d="M620 438l-18 15 2 25 12 20 30-40z" fill="#5d4a62" filter="url(#softer)"/>
              <path d="M612 482l-22 34 6 26-18 32 26 16 40-12 22-12-4-70-16-16z" fill="#422a4b" opacity=".75" filter="url(#softer)"/>
              <path d="M632 514l16 0 6 34-18 6zM625 478l18-5 2 20-14 4zM590 572l24-6 6 10-20 10z" fill="#0c8220" opacity=".8" filter="url(#softer)"/>
              <path d="M612 515l16-6 6 40-14 2z" fill="#716a76" opacity=".5" filter="url(#softer)"/>
              <path d="M552 625l10-6-2 12-12 6zM500 598l24-8 14 8-28 8z" fill="#0a8018"/>
              <path d="M310 95h350v580H310z" filter="url(#shade)" opacity=".65"/>
            </g>
          </g>

          <!-- River, canals and shore -->
          <g clip-path="url(#delta)">
            <path d="M604 456l4-2 3 14-5 2z" fill="#050505"/>
            <path d="M608 461l6 5M626 475l12-12" stroke="#b9a273" stroke-width="3"/>
            <g fill="none" stroke="#020802">
              <path d="M485 200l-9 12-24 14-12 12-3 24-12 10-35 8" stroke-width="2.500"/>
              <path d="M536 100l-2 30-5 43-22 14-18 26-55 62-12 50-41 118" stroke-width="1.300"/>
              <path d="M381 443v45l5 40 3 40" stroke-width="1.300"/>
              <path d="M384 440l3 50 20 58-4 12M490 240l20-12 15 5" opacity=".5"/>
              <path d="M447 310l12 78 8 90 8 55 5 80" opacity=".5"/>
              <path d="M640 468l-16 10-30 26-22 36-34 92-6 22" stroke-width="1.500"/>
              <path d="M581 404l-16 16M558 485l-6 40-22 12-3 38-10 12" opacity=".5"/>
              <path d="M482 612l60 2" opacity=".5"/>
            </g>
            <path d="M350 554l10 10 26 20 14 10 20 26 20 11 34 6 14 10 6 18-2-2-5-20-15-7-28-6-20-11-25-26-24-40 18 34-15-8z" fill="#010301" stroke="#010301" stroke-width="3"/>
            <path d="M524 100v16l-5 14-12 8-4 8 5 12 12 6-2 10-18-4-9-8-8 6M388 287l-2 10 8 8 3 20-5 10M355 305l3 14 14 16-1 10-9 22-12 5-16-15-10-3-6 8 8 8 12 10 5 16 20 9 6 8v12l-17 22-1 9 8 9 14 4 5 10-12 20v9l5 8-1 15" fill="none" stroke="#020702" stroke-width="2"/>
          </g>

          <path d="M316.500 100v563h625V100" fill="none" stroke="#66bfba" stroke-width="1"/>
          <path d="M1040 131l11 31-11-12-11 12z" fill="#f3ee2c" stroke="#8d8b2e" stroke-width="1"/>
          <g fill="none" stroke-linejoin="round"><path d="M1037 132v-8l6 8v-8" stroke="#77752f" stroke-width="3"/><path d="M1037 132v-8l6 8v-8" stroke="#e6e03a"/></g>
          <circle cx="282" cy="367" r="5" fill="#e4f4fd" stroke="#1a7fc7" stroke-width="3"/>
          <path d="M282 362a5 5 0 0 1 5 5" fill="none" stroke="#4db5ec" stroke-width="2"/>
        </svg>

        <!-- Task dialog -->
        <div role="dialog" aria-labelledby="taskTitle" class="absolute top-[207px] left-[279px] w-[314px] border border-[#aaa] bg-[#f0f0f0]">
          <h2 id="taskTitle" class="bg-white px-[6px] py-[7px] font-[Roboto,sans-serif] text-[10px] leading-3 text-[#999]">QUAC - Quick Atmospheric Correction Task</h2>
          <div class="px-4 pt-[11px] pb-3">
            <p id="taskState">Executing...</p>
            <div class="mt-[7px] flex items-start gap-[9px]">
              <div role="progressbar" aria-labelledby="taskState" class="mt-[2px] h-3 flex-1 border-t border-l border-[#999]"></div>
              <button class="h-[17px] w-[39px] border border-[#a5a5a5] bg-[#e1e1e1]">Cancel</button>
            </div>
          </div>
        </div>
      </section>

      <!-- Toolbox -->
      <section class="ml-[5px] flex w-[194px] shrink-0 flex-col pt-[2px]">
        <div class="flex h-[17px] shrink-0 items-center justify-between border-r border-b border-[#aaa] bg-linear-to-b from-[#dedede] to-[#c8c8c8] pr-1 pl-[22px]">
          <h2 class="text-[10px]">Toolbox</h2>
          <button aria-label="Undock toolbox"><svg class="h-[11px] w-[13px]"><use href="#dock"/></svg></button>
        </div>
        <div class="mt-1 flex shrink-0 items-center">
          <input type="text" aria-label="Search toolbox" value="QUI" class="h-[18px] min-w-0 flex-1 border border-[#888] bg-white px-[2px]"/>
          <button aria-label="Refresh" class="mr-[5px] ml-1"><svg class="size-[12px]"><use href="#sync"/></svg></button>
        </div>
        <input type="text" aria-label="Tool path" readonly value="/Radiometric Correction/Atmospheric Correction" class="mt-[2px] h-[18px] shrink-0 border border-[#888] px-px"/>
        <div class="flex h-[22px] shrink-0 items-center pl-1">
          <button aria-label="Previous match" disabled class="opacity-40"><svg class="size-[11px]"><use href="#squp"/></svg></button>
          <button aria-label="Next match" class="ml-[9px]"><svg class="size-[11px]"><use href="#sqdn"/></svg></button>
          <button aria-label="Add favorite" class="ml-[18px]"><svg class="size-[14px]"><use href="#star"/></svg></button>
          <button aria-label="Remove favorite" class="ml-[6px]"><svg class="size-[14px]"><use href="#star0"/></svg></button>
        </div>
        <div class="flex h-[247px] shrink-0 flex-col border border-[#8a8a8a] bg-white">
          <ul class="flex-1 pt-px pl-[10px]">
            <li class="flex h-[13px] items-center">
              <svg class="h-[13px] w-[9px] shrink-0" viewBox="0 0 9 13"><path d="M.5 13V6.500H9" fill="none" stroke="#aaa" stroke-dasharray="1 1"/></svg>
              <svg class="h-[13px] w-[14px] shrink-0"><use href="#puzzle"/></svg>
              <span class="ml-[2px] px-px">Quick Mosaic</span>
            </li>
            <li class="flex h-[13px] items-center">
              <svg class="h-[13px] w-[9px] shrink-0" viewBox="0 0 9 13"><path d="M.5 0V6.500H9" fill="none" stroke="#aaa" stroke-dasharray="1 1"/></svg>
              <svg class="h-[13px] w-[14px] shrink-0"><use href="#task"/></svg>
              <span class="ml-[2px] bg-[#0078d7] px-px whitespace-nowrap text-white">QUAC - Quick Atmospheric Correction</span>
            </li>
          </ul>
          <div class="flex h-[14px] items-center justify-between bg-[#f0f0f0] px-[3px]">
            <svg class="size-[10px]" viewBox="0 0 10 10"><path d="M6.500 2l-3 3 3 3" fill="none" stroke="#333" stroke-width="1.500"/></svg>
            <span class="mx-[2px] h-3 w-[154px] bg-[#cdcdcd]"></span>
            <svg class="ml-auto size-[10px]" viewBox="0 0 10 10"><path d="M3.500 2l3 3-3 3" fill="none" stroke="#333" stroke-width="1.500"/></svg>
          </div>
        </div>
        <div class="mt-px flex min-h-0 flex-1 flex-col overflow-hidden border border-[#8a8a8a]">
          <table class="w-full table-fixed border-collapse text-left text-[#777]">
            <thead>
              <tr class="h-[14px]">
                <td class="w-[82px]"></td>
                <th scope="col" class="border-b border-[#bbb] text-center font-normal text-black">Resampling</th>
              </tr>
            </thead>
            <tbody id="metadata"></tbody>
          </table>
          <div class="ml-[82px] flex-1 bg-white"></div>
        </div>
      </section>
    </main>

    <!-- Status bar -->
    <footer class="flex h-[22px] shrink-0 gap-[3px] bg-[#f0f0f0] pt-[1px] pr-[4px] pb-[3px] pl-[2px]">
      <p class="flex flex-1 items-center border border-[#999] px-[2px]">Lat: 30°18'33.63"N, Lon: 31°27'7.12"E</p>
      <p class="flex flex-1 items-center border border-[#999] px-[2px]">Proj: UTM, Zone 36 North, WGS-84</p>
      <p class="flex-1 border border-[#999]"></p>
      <div class="flex w-[117px] items-center justify-end gap-1 border-t-2 border-l border-[#888]">
        <button aria-label="Cancel processes"><svg class="size-[13px]" viewBox="0 0 12 12"><path d="M1 1l9 10M11 1L1 11" stroke="#000" stroke-width="1.800"/></svg></button>
        <button aria-label="Process manager"><svg class="size-[13px]" viewBox="0 0 13 13"><path d="M1.500.500h11v12h-11z" fill="#eee" stroke="#777"/><path d="M3 7h3v4H3z" fill="#111"/><path d="M7 3h4v8H7z" fill="#fff" stroke="#bbb"/></svg></button>
      </div>
    </footer>
  </div>

  <script>
    const metadata = [
      ['Dataset Name', 'Resampling'],
      ['Description', 'File Resize Result, x resize f'],
      ['Dimensions', '4,098 x 3,688 x 6 [BIP] UInt'],
      ['Projection', 'UTM, Zone 36 North'],
      ['Pixel Size', '15 Meters'],
      ['Datum', 'WGS-84'],
      ['Data Ignore Value', '0']
    ];

    const body = document.getElementById('metadata');
    metadata.forEach(([name, value]) => {
      const tr = document.createElement('tr');
      tr.className = 'h-[15px]';
      tr.innerHTML = `
        <th scope="row" class="border-r border-b border-[#bbb] pl-[2px] font-normal whitespace-nowrap">${name}</th>
        <td class="overflow-hidden border-b border-[#bbb] bg-white pl-px whitespace-nowrap">${value}</td>
      `;
      body.append(tr);
    });
  </script>
</body>
</html>
